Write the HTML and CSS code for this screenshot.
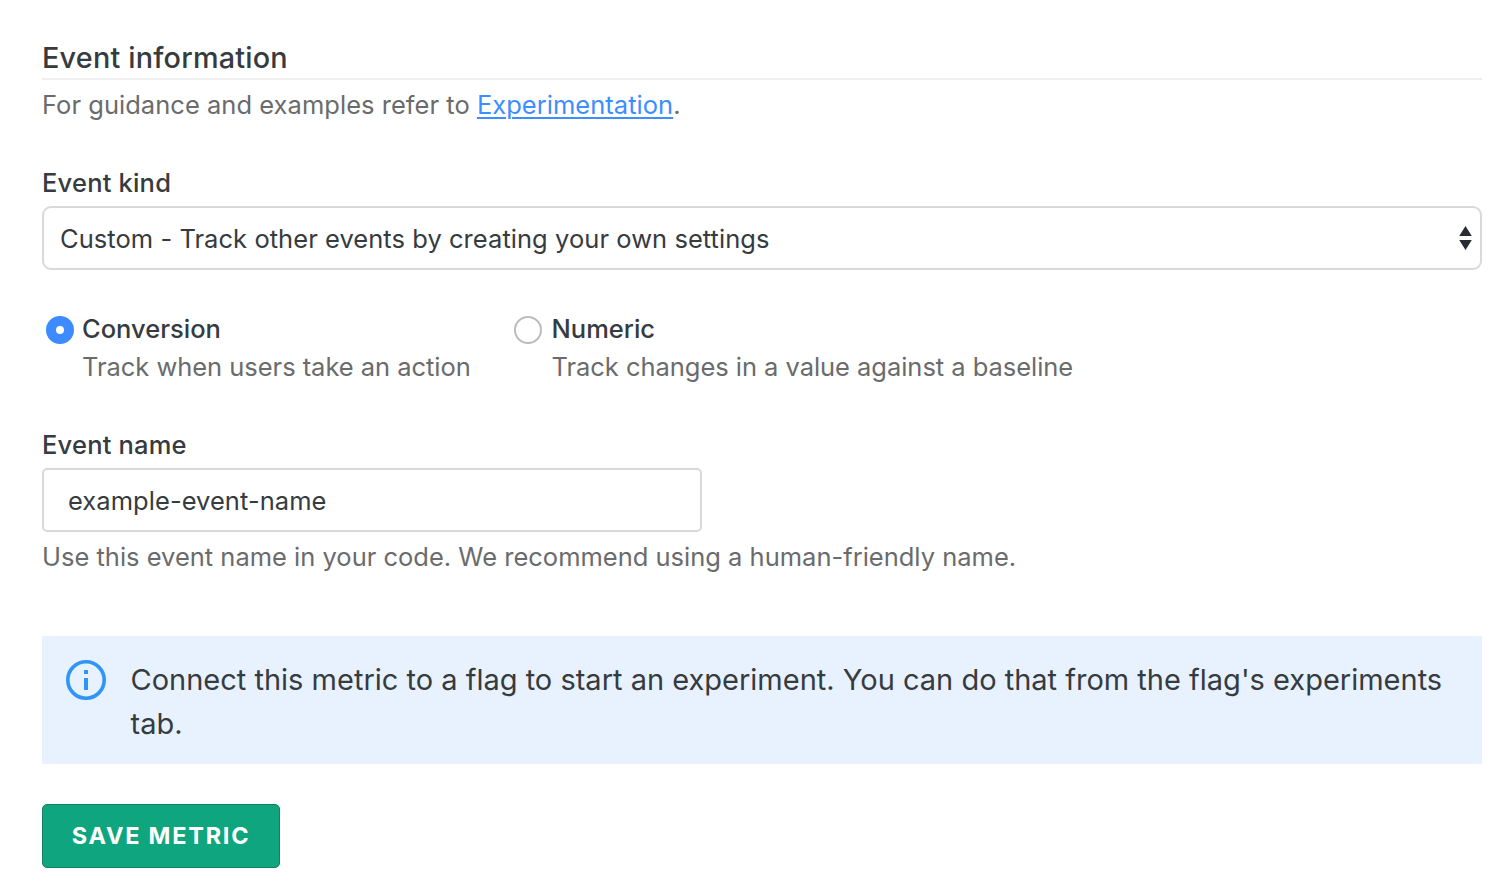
FILE: index.html
```html
<!DOCTYPE html>
<html lang="en">
<head>
<meta charset="utf-8">
<title>Event information</title>
<link rel="stylesheet" href="styles.css">
</head>
<body>
<form class="form">
  <h2 class="title"><span>Event information</span></h2>
  <p class="text intro"><span>For guidance and examples refer to <a class="link" href="#">Experimentation</a>.</span></p>

  <div class="label kind-label"><span>Event kind</span></div>
  <div class="field select">
    <span class="value select-value">Custom - Track other events by creating your own settings</span>
    <svg class="arrows" width="13" height="24" viewBox="0 0 13 24"><path d="M6.5 0 12.8 10H.2ZM.2 14H12.8L6.5 24Z" fill="#282d33"/></svg>
  </div>

  <div class="options">
    <div class="option first">
      <span class="radio checked"></span>
      <div>
        <div class="label choice">Conversion</div>
        <div class="text hint">Track when users take an action</div>
      </div>
    </div>
    <div class="option second">
      <span class="radio"></span>
      <div>
        <div class="label choice">Numeric</div>
        <div class="text hint">Track changes in a value against a baseline</div>
      </div>
    </div>
  </div>

  <div class="label name-label"><span>Event name</span></div>
  <div class="field input"><span class="value">example-event-name</span></div>
  <p class="text help"><span>Use this event name in your code. We recommend using a human-friendly name.</span></p>

  <div class="alert">
    <svg class="info" width="40" height="40" viewBox="0 0 40 40"><circle cx="20" cy="20" r="18.2" fill="none" stroke="#2f95f8" stroke-width="3.6"/><path d="M18 10h4v4h-4zM18 18h4v12h-4z" fill="#2f95f8"/></svg>
    <p class="alert-text">Connect this metric to a flag to start an experiment. You can do that from the flag's experiments<br>tab.</p>
  </div>

  <button class="button" type="button">SAVE METRIC</button>
</form>
</body>
</html>
```
FILE: styles.css
```css
* { box-sizing: border-box; }
body { margin: 0; background: #fff; color: #363b40; font-family: Inter, "Liberation Sans", sans-serif; }
.form { padding: 38px 26px 28px 42px; }
p, h2 { margin: 0; }
span, p, a, .label, .text { white-space: nowrap; }
.title { height: 42px; border-bottom: 2px solid #efefef; font-size: 28.8px; font-weight: 550; line-height: 40px; letter-spacing: .2px; }
.text { color: #6a6b6c; font-size: 25.5px; line-height: 36px; }
.intro { margin-top: 7px; letter-spacing: .03px; }
.link { color: #3d8eff; text-decoration: underline; text-decoration-thickness: 2px; text-underline-offset: 3px; }
.label { font-size: 25.5px; font-weight: 500; line-height: 36px; letter-spacing: .2px; }
.kind-label { margin-top: 42px; }
.field { display: flex; align-items: center; height: 64px; margin-top: 5px; border: 2px solid #d8d9da; border-radius: 7px; background: #fff; }
.select { justify-content: space-between; padding: 0 8px 0 16px; border-radius: 9px; }
.input { width: 660px; padding-left: 24px; border-radius: 5px; }
.value { padding-top: 2px; font-size: 25.5px; line-height: 36px; letter-spacing: .05px; }
.options { display: flex; margin-top: 41px; padding-left: 4px; }
.option { display: flex; gap: 8px; }
.first { width: 468px; }
.second { gap: 9.5px; }
.choice { letter-spacing: 0; }
.radio { flex: none; width: 28px; height: 28px; margin-top: 5px; border: 2px solid #bcbcbc; border-radius: 50%; }
.checked { border: 10px solid #3d8bff; }
.hint { margin-top: 2px; letter-spacing: -.04px; }
.name-label { margin-top: 42px; }
.help { margin-top: 7px; }
.alert { display: flex; gap: 24.5px; height: 128px; margin-top: 61px; padding: 22px 24px; background: #e8f2ff; }
.info { flex: none; margin-top: 2px; }
.alert-text { font-size: 29px; line-height: 44px; letter-spacing: 0; }
.button { display: block; width: 238px; height: 64px; margin-top: 40px; padding: 0; border: 1px solid #14805f; border-radius: 5px; background: #0fa67f; color: #fff; font: 700 23.5px/60px Inter, "Liberation Sans", sans-serif; letter-spacing: 1.75px; }
```
